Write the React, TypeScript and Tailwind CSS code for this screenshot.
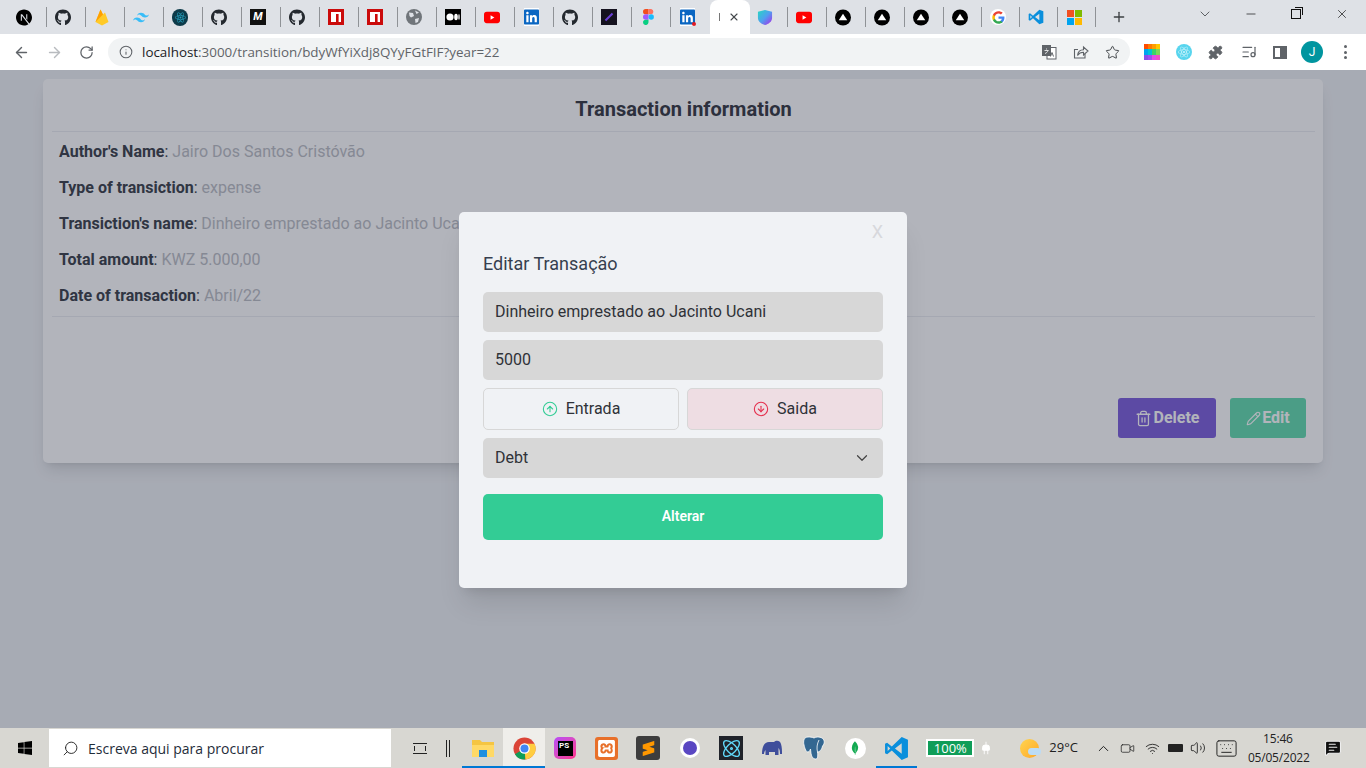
import React from 'react';
import {
  ArrowLeft,
  ArrowRight,
  RotateCw,
  Info,
  Star,
  Puzzle,
  ChevronDown,
  ChevronUp,
  Minus,
  X,
  Plus,
  Trash2,
  Pencil,
  CircleArrowUp,
  CircleArrowDown,
  Search,
  Video,
  Volume2,
  Keyboard,
  MessageSquareText,
  Plug,
  ListMusic,
  Wifi,
  Atom,
} from 'lucide-react';
import { FaGithub, FaWindows, FaLinkedin } from 'react-icons/fa';
import { SiTailwindcss, SiReact, SiNextdotjs, SiSublimetext, SiXampp, SiMongodb } from 'react-icons/si';

const GithubIcon = () => <FaGithub size={17} className="text-[#24292f]" />;

const Npm = () => (
  <svg width="16" height="16" viewBox="0 0 16 16">
    <rect width="16" height="16" fill="#cb0b0b" />
    <rect x="3" y="3" width="10" height="10" fill="#fff" />
    <rect x="8" y="5" width="2.6" height="8" fill="#cb0b0b" />
  </svg>
);

const Firebase = () => (
  <svg width="14" height="17" viewBox="0 0 14 17">
    <path d="M0.500 13 L5.500 0.500 L8 5.500 L10 3.500 L13.500 13 L7 16.500 Z" fill="#ffca28" />
    <path d="M0.500 13 L5.500 0.500 L8 5.500 Z" fill="#ffa000" />
  </svg>
);

const Globe = () => (
  <svg width="16" height="16" viewBox="0 0 16 16">
    <circle cx="8" cy="8" r="8" fill="#70757a" />
    <path d="M3 3.500 L7 4 L8 7 L5 8.500 L3.500 7 Z M9 10 L13 9 L12 13 L9.500 14 Z M9 1.500 L13 3.500 L10.500 5 Z" fill="#dee1e6" />
  </svg>
);

const MediumLogo = () => (
  <svg width="16" height="16" viewBox="0 0 16 16">
    <rect width="16" height="16" fill="#000" />
    <ellipse cx="5" cy="8" rx="3.600" ry="3.600" fill="#fff" />
    <ellipse cx="11" cy="8" rx="1.800" ry="3.300" fill="#fff" />
    <ellipse cx="14" cy="8" rx="0.700" ry="3" fill="#fff" />
  </svg>
);

const Triangle = () => (
  <svg width="17" height="17" viewBox="0 0 17 17">
    <circle cx="8.500" cy="8.500" r="8.500" fill="#000" />
    <path d="M8.500 4.500 L13 11.500 H4 Z" fill="#fff" />
  </svg>
);

const Youtube = () => (
  <svg width="17" height="13" viewBox="0 0 17 13">
    <rect width="17" height="12" y="0.500" rx="3" fill="#f00" />
    <path d="M7 4 L11 6.500 L7 9 Z" fill="#fff" />
  </svg>
);

const LinkedIn = ({ dot }: { dot?: boolean }) => (
  <div className="relative w-[15px] h-[15px] bg-[#0a66c2] rounded-[1px] flex items-center justify-center">
    <FaLinkedin size={18} className="text-[#0a66c2] bg-white" />
    {dot && <div className="absolute -right-[1px] -bottom-[1px] w-[4px] h-[4px] rounded-full bg-[#e01b24]" />}
  </div>
);

const Figma = () => (
  <svg width="11" height="16" viewBox="0 0 11 16">
    <path d="M0 2.700A2.700 2.700 0 0 1 2.700 0H5.500v5.300H2.700A2.700 2.700 0 0 1 0 2.700Z" fill="#f24e1e" />
    <path d="M5.500 0h2.700a2.700 2.700 0 0 1 0 5.300H5.500Z" fill="#ff7262" />
    <path d="M0 8a2.700 2.700 0 0 1 2.700-2.700H5.500v5.400H2.700A2.700 2.700 0 0 1 0 8Z" fill="#a259ff" />
    <circle cx="8.200" cy="8" r="2.700" fill="#1abcfe" />
    <path d="M0 13.300a2.700 2.700 0 0 1 2.700-2.600H5.500v2.600a2.700 2.700 0 0 1-5.500 0Z" fill="#0acf83" />
  </svg>
);

const Shield = () => (
  <svg width="17" height="17" viewBox="0 0 17 17">
    <defs>
      <linearGradient id="shield" x1="0" y1="0" x2="1" y2="1">
        <stop offset="0" stopColor="#25d9c0" />
        <stop offset="0.500" stopColor="#4f9ff0" />
        <stop offset="1" stopColor="#b026e8" />
      </linearGradient>
    </defs>
    <path d="M1 2.500 L8.500 0.500 L16 2.500 V9 C16 13 12 15.500 8.500 16.500 C5 15.500 1 13 1 9 Z" fill="url(#shield)" />
  </svg>
);

const GoogleG = () => (
  <div className="w-[16px] h-[16px] rounded-full bg-white flex items-center justify-center">
    <svg width="13" height="13" viewBox="0 0 24 24">
      <path d="M23 12.300c0-.8-.1-1.600-.2-2.300H12v4.400h6.200c-.3 1.400-1.100 2.600-2.300 3.400v2.800h3.700C21.800 18.600 23 15.700 23 12.300Z" fill="#4285f4" />
      <path d="M12 23.500c3.100 0 5.700-1 7.600-2.800l-3.700-2.900c-1 .7-2.300 1.100-3.900 1.100-3 0-5.500-2-6.400-4.800H1.800v2.900C3.700 20.800 7.600 23.500 12 23.500Z" fill="#34a853" />
      <path d="M5.600 14.100c-.5-1.400-.5-2.900 0-4.300V6.900H1.800c-1.600 3.200-1.600 7 0 10.100Z" fill="#fbbc05" />
      <path d="M12 4.800c1.700 0 3.200.6 4.400 1.700l3.300-3.300C17.700 1.400 15.100.4 12 .4 7.600.4 3.700 3.100 1.800 6.900l3.800 2.900C6.500 6.900 9 4.800 12 4.800Z" fill="#ea4335" />
    </svg>
  </div>
);

const Vscode = ({ size = 16 }: { size?: number }) => (
  <svg width={size} height={size} viewBox="0 0 24 24">
    <path d="M17 1 L7.500 10 L3 6.500 L1 7.500 V16.500 L3 17.500 L7.500 14 L17 23 L23 20.500 V3.500 Z M17 7 V17 L10.500 12 Z M3.500 9.500 L6 12 L3.500 14.500 Z" fill="#0a8fdc" fillRule="evenodd" />
  </svg>
);

const Microsoft = () => (
  <div className="grid grid-cols-2 gap-[1px] w-[15px] h-[15px]">
    <div className="bg-[#f25022]" />
    <div className="bg-[#7fba00]" />
    <div className="bg-[#00a4ef]" />
    <div className="bg-[#ffb900]" />
  </div>
);

const TranslateIcon = () => (
  <svg width="16" height="16" viewBox="0 0 16 16">
    <rect x="6" y="3.500" width="9" height="11.500" fill="#fff" stroke="#5f6368" />
    <rect x="1" y="1" width="9" height="11" fill="#5f6368" />
    <path d="M3.500 6.500h4M5.500 4.500v1M7 6.500c-.5 1.500-1.500 2.500-3 3" fill="none" stroke="#fff" strokeWidth="0.800" />
    <path d="M9.500 12.500l1.500-4 1.500 4" fill="none" stroke="#5f6368" />
  </svg>
);

const ShareIcon = () => (
  <svg width="16" height="16" viewBox="0 0 16 16" fill="none" stroke="#5f6368" strokeWidth="1.100">
    <path d="M5 5.500H1.500V14H12V10" />
    <path d="M4.500 11.500C5 7.500 7.500 5.800 10.500 5.800V3L15 7L10.500 11V8.300C8 8.300 6 9.300 4.500 11.500Z" />
  </svg>
);

const tabsLeft: React.ReactNode[] = [
  <SiNextdotjs size={17} className="text-black" />,
  <GithubIcon />,
  <Firebase />,
  <SiTailwindcss size={17} className="text-[#38bdf8]" />,
  <div className="w-[17px] h-[17px] rounded-full bg-[#0d3b4a] flex items-center justify-center">
    <SiReact size={11} className="text-[#26a7c5]" />
  </div>,
  <GithubIcon />,
  <div className="w-[16px] h-[16px] bg-[#111] text-white text-[11px] italic font-bold flex items-center justify-center font-['Roboto',sans-serif]">M</div>,
  <GithubIcon />,
  <Npm />,
  <Npm />,
  <Globe />,
  <MediumLogo />,
  <Youtube />,
  <LinkedIn />,
  <GithubIcon />,
  <div className="w-[16px] h-[16px] bg-[#15121f] flex items-center justify-center">
    <div className="w-[2px] h-[10px] bg-[#6a3fd6] rotate-45" />
  </div>,
  <Figma />,
  <LinkedIn dot />,
];

const tabsRight: { icon: React.ReactNode; w: string }[] = [
  { icon: <Shield />, w: 'w-[38px] pl-[7px]' },
  { icon: <Youtube />, w: 'w-[39px] pl-[8px]' },
  { icon: <Triangle />, w: 'w-[39px] pl-[8px]' },
  { icon: <Triangle />, w: 'w-[39px] pl-[8px]' },
  { icon: <Triangle />, w: 'w-[39px] pl-[8px]' },
  { icon: <Triangle />, w: 'w-[38px] pl-[8px]' },
  { icon: <GoogleG />, w: 'w-[38px] pl-[8px]' },
  { icon: <Vscode />, w: 'w-[38px] pl-[8px]' },
  { icon: <Microsoft />, w: 'w-[38px] pl-[8px]' },
];

const TabBar = () => (
  <div className="h-[34px] bg-[#dee1e6] flex items-center pl-[8px] shrink-0">
    {tabsLeft.map((icon, i) => (
      <div key={i} className="w-[39px] h-[34px] flex items-center pl-[8px] relative shrink-0">
        <div className="w-[16px] flex items-center justify-center">{icon}</div>
        {i < 17 && <div className="absolute right-0 top-[7px] w-px h-[20px] bg-[#8f9296]" />}
      </div>
    ))}
    <div className="w-[40px] h-[34px] bg-white rounded-t-[8px] flex items-center shrink-0 text-[#45494d]">
      <div className="w-px h-[8px] bg-[#777] ml-[9px]" />
      <X size={12} strokeWidth={2.2} className="ml-[8px]" />
    </div>
    {tabsRight.map((t, i) => (
      <div key={i} className={`${t.w} h-[34px] flex items-center relative shrink-0`}>
        <div className="w-[16px] flex items-center justify-center">{t.icon}</div>
        <div className="absolute right-0 top-[7px] w-px h-[20px] bg-[#8f9296]" />
      </div>
    ))}
    <Plus size={16} strokeWidth={2} className="ml-[15px] text-[#3c4043]" />
    <ChevronDown size={16} strokeWidth={1.2} className="ml-[70px] -mt-[6px] text-[#3c4043]" />
    <Minus size={14} strokeWidth={1.2} className="ml-[31px] -mt-[6px] text-[#111]" />
    <div className="ml-[33px] -mt-[6px] w-[10px] h-[10px] border border-[#111] relative">
      <div className="absolute -right-[3px] -top-[3px] w-[8px] h-[8px] border-t border-r border-[#111]" />
    </div>
    <X size={14} strokeWidth={1.2} className="ml-[34px] -mt-[6px] text-[#111]" />
  </div>
);

const UrlBar = () => (
  <div className="h-[36px] bg-white flex items-center shrink-0 text-[#5f6368]">
    <ArrowLeft size={17} strokeWidth={2} className="ml-[13px]" />
    <ArrowRight size={17} strokeWidth={2} className="ml-[16px] text-[#b8bbbf]" />
    <RotateCw size={15} strokeWidth={2} className="ml-[16px]" />
    <div className="ml-[14px] w-[1022px] h-[28px] rounded-full bg-[#f1f3f4] flex items-center pl-[11px]">
      <Info size={14} strokeWidth={1.8} />
      <div className="ml-[9px] text-[13.4px] font-['Open_Sans',sans-serif] whitespace-nowrap">
        <span className="text-[#202124]">localhost</span>:3000/transition/bdyWfYiXdj8QYyFGtFIF?year=22
      </div>
      <div className="ml-auto">
        <TranslateIcon />
      </div>
      <div className="ml-[16px]">
        <ShareIcon />
      </div>
      <Star size={15} strokeWidth={1.6} className="ml-[16px] mr-[10px] text-[#45494d]" />
    </div>
    <div className="ml-[14px] grid grid-cols-4 grid-rows-3 w-[16px] h-[16px]">
      {['#ff4d00', '#ff7a00', '#ff9d00', '#ffc800', '#00a4ef', '#00c4d4', '#3ad46a', '#7ed957', '#8a4fe8', '#a04ff0', '#e04fe8', '#f04fc8'].map((c) => (
        <div key={c} style={{ backgroundColor: c }} />
      ))}
    </div>
    <div className="ml-[16px] w-[16px] h-[16px] rounded-full bg-[#58d5ee] flex items-center justify-center">
      <SiReact size={12} className="text-[#c6f2fb]" />
    </div>
    <Puzzle size={15} fill="#5f6368" strokeWidth={1.5} className="ml-[16px]" />
    <ListMusic size={16} strokeWidth={1.8} className="ml-[18px]" />
    <div className="ml-[16px] w-[14px] h-[13px] border-2 border-[#5f6368] flex justify-end">
      <div className="w-[5px] h-full bg-[#5f6368]" />
    </div>
    <div className="ml-[14px] w-[22px] h-[22px] rounded-full bg-[#00959f] text-white text-[12px] flex items-center justify-center font-['Roboto',sans-serif]">J</div>
    <div className="ml-[21px] flex flex-col gap-[2.500px]">
      <div className="w-[3px] h-[3px] rounded-full bg-[#5f6368]" />
      <div className="w-[3px] h-[3px] rounded-full bg-[#5f6368]" />
      <div className="w-[3px] h-[3px] rounded-full bg-[#5f6368]" />
    </div>
  </div>
);

const rows = [
  ["Author's Name", 'Jairo Dos Santos Cristóvão'],
  ['Type of transiction', 'expense'],
  ["Transiction's name", 'Dinheiro emprestado ao Jacinto Ucani'],
  ['Total amount', 'KWZ 5.000,00'],
  ['Date of transaction', 'Abril/22'],
];

const TransactionCard = () => (
  <div className="w-[1280px] h-[384px] bg-white rounded-[5px] shadow-lg pl-[9px] pr-[8px] flex flex-col">
    <h1 className="h-[53px] pt-[16px] text-center text-[20px] leading-[28px] font-bold text-[#3f434b] border-b border-[#eceef2]">
      Transaction information
    </h1>
    <div className="pt-[2px] pb-[2px] border-b border-[#eceef2]">
      {rows.map(([label, value]) => (
        <p key={label} className="h-[36px] pl-[7px] flex items-center text-[16px] text-[#bfc2c8] whitespace-pre">
          <span className="font-bold text-[#454a52]">{label}</span>
          <span className="text-[#454a52]">: </span>
          {value}
        </p>
      ))}
    </div>
    <div className="flex justify-end gap-[14px] mt-[81px] pr-[9px]">
      <button className="w-[98px] h-[40px] rounded-[3px] bg-[#8568de] text-white font-bold text-[16px] flex items-center justify-center gap-[2px]">
        <Trash2 size={17} strokeWidth={1.8} />
        Delete
      </button>
      <button className="w-[76px] h-[40px] rounded-[3px] bg-[#6cdfb4] text-white font-bold text-[16px] flex items-center justify-center gap-[1px]">
        <Pencil size={15} strokeWidth={1.8} />
        Edit
      </button>
    </div>
  </div>
);

const fieldClass = 'w-full h-[40px] rounded-[5px] bg-[#d7d7d7] px-[12px] text-[16px] text-[#2f3238] outline-none';

const EditModal = () => (
  <div className="w-[448px] h-[376px] bg-[#f0f2f5] rounded-[5px] shadow-xl p-[24px] relative">
    <span className="absolute right-[24px] top-[9px] text-[18px] leading-[21px] text-[#d7d8dc]">X</span>
    <h2 className="mt-[16px] text-[18px] leading-[24px] text-[#363f4f]">Editar Transação</h2>
    <div className="mt-[16px] flex flex-col gap-[8px]">
      <input className={`${fieldClass} pb-[2px]`} readOnly value="Dinheiro emprestado ao Jacinto Ucani" />
      <input className={`${fieldClass} pb-[2px]`} readOnly value="5000" />
      <div className="grid grid-cols-2 gap-[8px]">
        <button className="h-[42px] rounded-[5px] border border-[#d7d7d7] flex items-center justify-center gap-[8px] text-[16px] text-[#2f3238]">
          <CircleArrowUp size={16} strokeWidth={1.6} className="text-[#33cc95]" />
          Entrada
        </button>
        <button className="h-[42px] rounded-[5px] border border-[#d7d7d7] bg-[#eedde3] flex items-center justify-center gap-[8px] text-[16px] text-[#2f3238]">
          <CircleArrowDown size={16} strokeWidth={1.6} className="text-[#e52e4d]" />
          Saida
        </button>
      </div>
      <div className={`${fieldClass} flex items-center justify-between`}>
        Debt
        <ChevronDown size={18} strokeWidth={1.6} className="text-[#444]" />
      </div>
    </div>
    <button className="mt-[16px] w-full h-[46px] pb-[2px] rounded-[5px] bg-[#33cc95] text-white text-[14px] font-semibold">Alterar</button>
  </div>
);

const Elephant = () => (
  <svg width="22" height="18" viewBox="0 0 22 18">
    <path d="M1 15 C1 8 3 3 8 3 H13 C15 1 19 1 20 5 C21 8 21 12 21 15 H19 C19 12 18.500 10 17.500 9 V16 H14 V13 H8 V16 H4.500 V11 C3.500 12 3 14 3 15 Z" fill="#3f4e9b" />
  </svg>
);

const Postgres = () => (
  <svg width="22" height="24" viewBox="0 0 22 24">
    <path d="M5 1 C1 1 0 5 1 9 C2 13 3 16 5 16 C6.500 16 7 14 7.500 13 C8 17 8 22 12 23 C15 23.500 15 20 14.500 16 C17 16 19 13 19.500 10 C22 8 22 3 18 1.500 C15 0.500 13 1 11 2 C9 1 7 1 5 1 Z" fill="#336791" stroke="#fff" strokeWidth="0.800" />
    <path d="M14.500 16 C13.500 12 14 8 16 4" fill="none" stroke="#fff" strokeWidth="0.800" />
  </svg>
);

const taskApps: { icon: React.ReactNode; active?: boolean; open?: boolean }[] = [
  {
    open: true,
    icon: (
      <svg width="22" height="20" viewBox="0 0 22 20">
        <path d="M0 2h8l2 2h12v14H0Z" fill="#f5c542" />
        <rect y="7" width="22" height="12" fill="#ffd966" />
        <rect x="7" y="12" width="8" height="7" fill="#1f8fe0" />
      </svg>
    ),
  },
  {
    open: true,
    active: true,
    icon: (
      <svg width="23" height="23" viewBox="0 0 24 24">
        <circle cx="12" cy="12" r="11.500" fill="#db4437" />
        <path d="M12 12 L2 18 A11.500 11.500 0 0 0 13 23.500 Z" fill="#0f9d58" />
        <path d="M12 12 L13 23.500 A11.500 11.500 0 0 0 22.500 7 H12 Z" fill="#ffcd40" />
        <circle cx="12" cy="12" r="5.500" fill="#fff" />
        <circle cx="12" cy="12" r="4.200" fill="#4285f4" />
      </svg>
    ),
  },
  {
    icon: (
      <div className="w-[22px] h-[22px] rounded-[5px] bg-gradient-to-br from-[#b74af7] to-[#ff318c] flex items-center justify-center">
        <div className="w-[15px] h-[15px] bg-black text-white text-[8px] font-bold leading-[10px] pl-[1px] font-['Roboto',sans-serif]">PS</div>
      </div>
    ),
  },
  {
    icon: (
      <div className="w-[23px] h-[23px] rounded-[3px] bg-[#e8702a] flex items-center justify-center">
        <SiXampp size={17} className="text-white" />
      </div>
    ),
  },
  {
    icon: (
      <div className="w-[24px] h-[24px] rounded-[3px] bg-[#3d3d3d] flex items-center justify-center">
        <SiSublimetext size={15} className="text-[#ff9800]" />
      </div>
    ),
  },
  {
    icon: (
      <div className="w-[20px] h-[20px] rounded-full bg-white flex items-center justify-center">
        <div className="w-[14px] h-[14px] rounded-full bg-[#5a47c2]" />
      </div>
    ),
  },
  {
    icon: (
      <div className="w-[24px] h-[24px] bg-[#20232a] flex items-center justify-center">
        <Atom size={21} strokeWidth={1.5} className="text-[#61dafb]" />
      </div>
    ),
  },
  { icon: <Elephant /> },
  { icon: <Postgres /> },
  {
    icon: (
      <div className="w-[21px] h-[21px] rounded-full bg-white flex items-center justify-center">
        <SiMongodb size={14} className="text-[#13aa52]" />
      </div>
    ),
  },
  { open: true, icon: <Vscode size={25} /> },
];

const Taskbar = () => (
  <div className="h-[40px] bg-[#d8d7d2] flex items-center shrink-0 font-['Open_Sans',sans-serif] text-[#202020]">
    <div className="w-[49px] flex justify-center">
      <FaWindows size={16} className="text-black" />
    </div>
    <div className="w-[342px] h-[38px] bg-white flex items-center pl-[13px]">
      <Search size={17} strokeWidth={1.3} className="-scale-x-100 text-[#222]" />
      <span className="ml-[9px] text-[14px] text-[#1f2d3a] whitespace-nowrap">Escreva aqui para procurar</span>
    </div>
    <div className="w-[71px] flex items-center pl-[22px]">
      <div className="w-[14px] h-[11px] border-y border-[#222] relative">
        <div className="absolute inset-x-[1px] top-[2px] bottom-[2px] border-x border-[#222]" />
      </div>
      <div className="ml-[19px] w-[4px] h-[17px] border-x border-[#222]" />
    </div>
    <div className="flex h-full">
      {taskApps.map((app, i) => (
        <div key={i} className={`w-[41.400px] h-full flex items-center justify-center relative ${app.active ? 'bg-[#efeeea]' : ''}`}>
          {app.icon}
          {app.open && <div className="absolute bottom-0 inset-x-0 h-[2px] bg-[#0078d4]" />}
        </div>
      ))}
    </div>
    <div className="ml-[9px] w-[48px] h-[18px] border-2 border-white bg-[#0f9d58] text-white text-[13px] leading-[14px] text-center">100%</div>
    <Plug size={14} fill="#fff" strokeWidth={1.5} className="ml-[5px] text-white rotate-180" />
    <div className="ml-[27px] w-[19px] h-[19px] rounded-full bg-gradient-to-br from-[#ffd54f] to-[#ffa726] relative">
      <div className="absolute -right-[2px] bottom-[3px] w-[13px] h-[7px] rounded-full bg-[#bcdcf5]" />
    </div>
    <span className="ml-[10px] text-[13px]">29°C</span>
    <ChevronUp size={17} strokeWidth={1.4} className="ml-[17px]" />
    <Video size={15} strokeWidth={1.2} className="ml-[8px]" />
    <Wifi size={15} strokeWidth={1.4} className="ml-[10px]" />
    <div className="ml-[8px] w-[15px] h-[8px] bg-[#222] rounded-[1px]" />
    <Volume2 size={16} strokeWidth={1.3} className="ml-[7px]" />
    <Keyboard size={23} strokeWidth={1} className="ml-[9px]" />
    <div className="ml-[10px] w-[60px] text-center text-[12px] leading-[19px] tracking-[-0.2px] text-[#222]">
      <div>15:46</div>
      <div>05/05/2022</div>
    </div>
    <MessageSquareText size={18} fill="#111" strokeWidth={1.5} className="ml-[16px] text-[#eee]" />
  </div>
);

const App = () => {
  return (
    <div className="w-full h-screen flex flex-col overflow-hidden font-['Roboto',sans-serif]">
      <TabBar />
      <UrlBar />
      <main className="flex-1 relative bg-[#f0f2f5] px-[43px] pt-[9px]">
        <TransactionCard />
        {/* Modal overlay */}
        <div className="absolute inset-0 pt-[2px] bg-[rgba(0,8,30,0.3)] flex items-center justify-center">
          <EditModal />
        </div>
      </main>
      <Taskbar />
    </div>
  );
};

export default App;
